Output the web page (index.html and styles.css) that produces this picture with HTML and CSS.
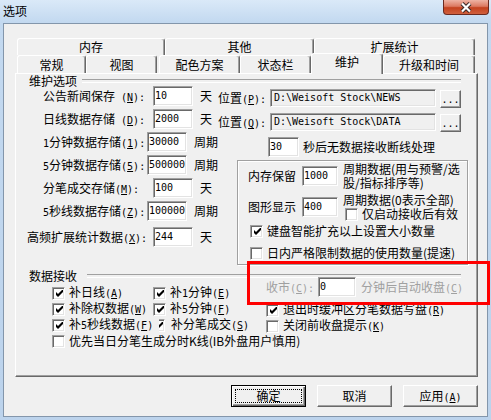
FILE: index.html
```html
<!DOCTYPE html>
<html lang="zh-CN">
<head>
    <meta charset="UTF-8">
    <title>选项</title>
    <link rel="stylesheet" href="styles.css">
</head>
<body>
<div class="window">
    <div class="titlebar">
        <span class="title">选项</span>
        <div class="close">
            <svg width="14" height="11" viewBox="0 0 14 11">
                <path d="M3 1.5 L11 9.5 M11 1.5 L3 9.5" stroke="#3a2a28" stroke-width="4.2"/>
                <path d="M3 1.5 L11 9.5 M11 1.5 L3 9.5" stroke="#fff" stroke-width="2.2"/>
            </svg>
        </div>
    </div>

    <div class="client">
        <div class="tabs">
            <div class="tabrow back">
                <div class="tab tab-memory">内存</div>
                <div class="tab tab-other">其他</div>
                <div class="tab tab-stats">扩展统计</div>
            </div>
            <div class="tabrow front">
                <div class="tab tab-general">常规</div>
                <div class="tab tab-view">视图</div>
                <div class="tab tab-colors">配色方案</div>
                <div class="tab tab-status">状态栏</div>
                <div class="tab tab-maint active">维护</div>
                <div class="tab tab-upgrade">升级和时间</div>
            </div>
        </div>

        <div class="panel">
            <div class="group-title">维护选项</div>
            <div class="maint">
                <div class="maint-left">
                    <div class="field">
                        <span class="lbl">公告新闻保存<span class="en"> (<u>N</u>):</span></span>
                        <div class="edit num">10</div>
                        <span class="unit">天</span>
                    </div>
                    <div class="field">
                        <span class="lbl">日线数据存储<span class="en"> (<u>D</u>):</span></span>
                        <div class="edit num">2000</div>
                        <span class="unit">天</span>
                    </div>
                    <div class="field">
                        <span class="lbl"><span class="en">1</span>分钟数据存储<span class="en">(<u>1</u>):</span></span>
                        <div class="edit num">30000</div>
                        <span class="unit">周期</span>
                    </div>
                    <div class="field">
                        <span class="lbl"><span class="en">5</span>分钟数据存储<span class="en">(<u>5</u>):</span></span>
                        <div class="edit num">500000</div>
                        <span class="unit">周期</span>
                    </div>
                    <div class="field">
                        <span class="lbl">分笔成交存储<span class="en">(<u>M</u>):</span></span>
                        <div class="edit num">100</div>
                        <span class="unit">天</span>
                    </div>
                    <div class="field">
                        <span class="lbl"><span class="en">5</span>秒线数据存储<span class="en">(<u>Z</u>):</span></span>
                        <div class="edit num">100000</div>
                        <span class="unit">周期</span>
                    </div>
                    <div class="field gap">
                        <span class="lbl wide">高频扩展统计数据<span class="en">(<u>X</u>):</span></span>
                        <div class="edit num">244</div>
                        <span class="unit">天</span>
                    </div>
                </div>

                <div class="maint-right">
                    <div class="path-row">
                        <span class="lbl">位置<span class="en">(<u>P</u>):</span></span>
                        <div class="edit path">D:\Weisoft Stock\NEWS</div>
                        <div class="dots">...</div>
                    </div>
                    <div class="path-row">
                        <span class="lbl">位置<span class="en">(<u>Q</u>):</span></span>
                        <div class="edit path">D:\Weisoft Stock\DATA</div>
                        <div class="dots">...</div>
                    </div>
                    <div class="timeout">
                        <div class="edit short">30</div>
                        <span>秒后无数据接收断线处理</span>
                    </div>

                    <div class="mem-box">
                        <div class="mem-row">
                            <span class="lbl">内存保留</span>
                            <div class="edit mid">1000</div>
                            <div class="mem-note">周期数据(用与预警/选<br>股/指标排序等)</div>
                        </div>
                        <div class="mem-row">
                            <span class="lbl">图形显示</span>
                            <div class="edit mid">400</div>
                            <div class="mem-note">
                                <div>周期数据(0表示全部)</div>
                                <label class="check sub"><span class="box"></span><span>仅启动接收后有效</span></label>
                            </div>
                        </div>
                        <label class="check first">
                            <span class="box"><svg width="7" height="7" viewBox="0 0 7 7"><path d="M0 2 L2 4 L7 -1 L7 2 L2 7 L0 5 Z"/></svg></span><span>键盘智能扩充以上设置大小数量</span>
                        </label>
                        <label class="check second"><span class="box"></span><span>日内严格限制数据的使用数量(提速)</span></label>
                    </div>
                </div>
            </div>

            <div class="group-title receive-title">数据接收</div>
            <div class="receive">
                <div class="receive-left">
                    <label class="check"><span class="box"><svg width="7" height="7" viewBox="0 0 7 7"><path d="M0 2 L2 4 L7 -1 L7 2 L2 7 L0 5 Z"/></svg></span><span>补日线<span class="en">(<u>A</u>)</span></span></label>
                    <label class="check"><span class="box"><svg width="7" height="7" viewBox="0 0 7 7"><path d="M0 2 L2 4 L7 -1 L7 2 L2 7 L0 5 Z"/></svg></span><span>补<span class="en">1</span>分钟<span class="en">(<u>E</u>)</span></span></label>
                    <label class="check"><span class="box"><svg width="7" height="7" viewBox="0 0 7 7"><path d="M0 2 L2 4 L7 -1 L7 2 L2 7 L0 5 Z"/></svg></span><span>补除权数据<span class="en">(<u>W</u>)</span></span></label>
                    <label class="check"><span class="box"><svg width="7" height="7" viewBox="0 0 7 7"><path d="M0 2 L2 4 L7 -1 L7 2 L2 7 L0 5 Z"/></svg></span><span>补<span class="en">5</span>分钟<span class="en">(<u>F</u>)</span></span></label>
                    <label class="check"><span class="box"><svg width="7" height="7" viewBox="0 0 7 7"><path d="M0 2 L2 4 L7 -1 L7 2 L2 7 L0 5 Z"/></svg></span><span>补<span class="en">5</span>秒线数据<span class="en">(<u>F</u>)</span></span></label>
                    <label class="check"><span class="box-clip"><span class="box"><svg width="7" height="7" viewBox="0 0 7 7"><path d="M0 2 L2 4 L7 -1 L7 2 L2 7 L0 5 Z"/></svg></span></span><span>补分笔成交<span class="en">(<u>S</u>)</span></span></label>
                    <label class="check span"><span class="box"></span><span>优先当日分笔生成分时K线(IB外盘用户慎用)</span></label>
                </div>

                <div class="receive-right">
                    <div class="close-row">
                        <span class="lbl">收市<span class="en">(<u>C</u>):</span></span>
                        <div class="edit cnum">0</div>
                        <span class="after">分钟后自动收盘<span class="en">(<u>C</u>)</span></span>
                    </div>
                    <label class="check first"><span class="box"><svg width="7" height="7" viewBox="0 0 7 7"><path d="M0 2 L2 4 L7 -1 L7 2 L2 7 L0 5 Z"/></svg></span><span>退出时缓冲区分笔数据写盘<span class="en">(<u>R</u>)</span></span></label>
                    <label class="check"><span class="box"></span><span>关闭前收盘提示<span class="en">(<u>K</u>)</span></span></label>
                </div>
            </div>
        </div>

        <div class="buttons">
            <div class="btn default"><span class="focus">确定</span></div>
            <div class="btn">取消</div>
            <div class="btn">应用<span class="en">(<u>A</u>)</span></div>
        </div>
    </div>

    <div class="mark"></div>
</div>
</body>
</html>
```

FILE: styles.css
```css
* {
    box-sizing: border-box;
}

body {
    margin: 0;
    font-family: "Noto Sans CJK SC", sans-serif;
    font-size: 12px;
    line-height: 14px;
    color: #000;
    background-color: #bcd3ec;
}

.en {
    font-family: "DejaVu Sans Mono", monospace;
    font-size: 10px;
}

u {
    text-underline-offset: 1px;
}

/* window frame */
.window {
    position: relative;
    width: 491px;
    height: 420px;
    display: flex;
    flex-direction: column;
    overflow: hidden;
    background: linear-gradient(to bottom, #dae9f8 0, #c3d9f0 22px, #bcd3ec 100%);
}

.titlebar {
    height: 23px;
    display: flex;
    justify-content: space-between;
    align-items: flex-start;
}

.title {
    padding: 4px 0 0 3px;
}

.close {
    width: 46px;
    height: 15px;
    margin-right: 2px;
    border: 1px solid #6b2a20;
    border-top: none;
    border-radius: 0 0 4px 4px;
    background: linear-gradient(to bottom, #eeb3a4 0, #dc7a62 45%, #c4421f 55%, #d0603e 100%);
    display: flex;
    align-items: center;
    justify-content: center;
}

.client {
    flex: 1;
    margin: 0 3px 3px;
    border: 1px solid #8396ab;
    background-color: #f0f0f0;
    padding: 14px 9px 0 11px;
}

/* tabs */
.tabs {
    width: 463px;
    height: 35px;
}

.tabrow {
    display: flex;
    padding: 0 2px;
}

.back {
    height: 17px;
}

.front {
    height: 18px;
    align-items: flex-end;
}

.tab {
    flex: none;
    border: 1px solid;
    border-color: #fff #696969 transparent #fff;
    border-bottom: none;
    border-radius: 3px 3px 0 0;
    box-shadow: inset -1px 0 #a0a0a0;
    background-color: #f0f0f0;
    text-align: center;
}

.back .tab {
    height: 17px;
    line-height: 16px;
}

.front .tab {
    height: 18px;
    line-height: 17px;
}

.front .tab.active {
    height: 21px;
    margin-bottom: -1px;
    line-height: 16px;
    position: relative;
    z-index: 1;
}

.tab-memory { width: 148px; }
.tab-other { width: 149px; }
.tab-stats { width: 161px; }
.tab-general { width: 69px; }
.tab-view { width: 71px; }
.tab-colors { width: 81px; margin-left: 2px; }
.tab-status { width: 71px; }
.tab-maint { width: 72px; }
.tab-upgrade { width: 92px; }

/* tab page */
.panel {
    width: 463px;
    height: 304px;
    border: 1px solid;
    border-color: #fff #696969 #696969 #fff;
    box-shadow: inset -1px -1px #a0a0a0;
}

.group-title {
    display: flex;
    align-items: center;
    height: 14px;
    line-height: 14px;
    margin: 0 16px 0 13px;
}

.group-title::after {
    content: "";
    flex: 1;
    height: 2px;
    margin-left: 5px;
    border-top: 1px solid #a0a0a0;
    border-bottom: 1px solid #fff;
}

.receive-title {
    margin-top: 4px;
}

.receive-title::after {
    margin-left: 10px;
}

.edit {
    flex: none;
    height: 20px;
    background-color: #fff;
    border: 1px solid;
    border-color: #a0a0a0 #fff #fff #a0a0a0;
    box-shadow: inset 1px 1px #696969, inset -1px -1px #e3e3e3;
    padding-left: 1px;
    font-family: "DejaVu Sans Mono", monospace;
    font-size: 10px;
    line-height: 17px;
    white-space: nowrap;
    overflow: hidden;
}

.maint {
    display: flex;
    margin-top: -2px;
}

.maint-left {
    width: 202px;
}

.field {
    display: flex;
    height: 23px;
}

.field.gap {
    margin-top: 3px;
}

.field .lbl {
    width: 137px;
    padding-left: 27px;
    line-height: 20px;
    white-space: nowrap;
}

.field .lbl.wide {
    padding-left: 11px;
}

.edit.num {
    width: 40px;
}

.unit {
    margin-left: 7px;
    line-height: 20px;
    white-space: nowrap;
}

.maint-right {
    flex: 1;
    display: flex;
    flex-direction: column;
    align-items: flex-start;
}

.path-row {
    display: flex;
    align-items: flex-start;
    height: 18px;
    margin-top: 3px;
}

.path-row + .path-row {
    margin-top: 6px;
}

.path-row .lbl {
    width: 52px;
    line-height: 18px;
    white-space: nowrap;
}

.edit.path {
    width: 166px;
    height: 18px;
    line-height: 15px;
    padding-left: 3px;
    background-color: #f0f0f0;
}

.dots {
    width: 21px;
    height: 18px;
    margin: 1px 0 0 4px;
    border: 1px solid;
    border-color: #fff #696969 #696969 #fff;
    box-shadow: inset -1px -1px #a0a0a0;
    text-align: center;
    font-family: "DejaVu Sans Mono", monospace;
    font-size: 10px;
    line-height: 18px;
}

.timeout {
    display: flex;
    margin: 6px 0 0 50px;
}

.edit.short {
    width: 31px;
}

.timeout span {
    margin-left: 4px;
    line-height: 20px;
    white-space: nowrap;
}

.mem-box {
    width: 231px;
    height: 105px;
    margin: 3px 0 0 19px;
    padding: 1px 0 0 10px;
    border: 1px solid #a0a0a0;
    box-shadow: inset 1px 1px #fff, 1px 1px #fff;
}

.mem-row {
    display: flex;
    align-items: center;
    height: 28px;
}

.mem-row + .mem-row {
    margin-top: 3px;
}

.mem-row .lbl {
    width: 54px;
}

.edit.mid {
    width: 36px;
}

.mem-note {
    margin-left: 5px;
    line-height: 14px;
    white-space: nowrap;
}

/* check boxes */
.check {
    display: flex;
    align-items: center;
    height: 16px;
    white-space: nowrap;
}

.box {
    flex: none;
    width: 13px;
    height: 13px;
    margin-right: 4px;
    background-color: #fff;
    border: 1px solid;
    border-color: #a0a0a0 #fff #fff #a0a0a0;
    box-shadow: inset 1px 1px #696969, inset -1px -1px #e3e3e3;
    display: flex;
    align-items: center;
    justify-content: center;
}

.box svg {
    margin: 1px 0 0 1px;
}

.box-clip {
    flex: none;
    width: 6px;
    height: 13px;
    margin-left: 6px;
    margin-right: 6px;
    display: flex;
    justify-content: flex-end;
    overflow: hidden;
}

.box-clip .box {
    margin-right: 0;
}

.check.sub {
    height: 14px;
    margin-left: 2px;
}

.mem-box .check.first {
    height: 14px;
    margin: 3px 0 0 2px;
}

.mem-box .check.second {
    height: 14px;
    margin: 8px 0 0 2px;
}

/* data receive */
.receive {
    display: flex;
    margin-top: -6px;
}

.receive-left {
    width: 214px;
    margin-left: 36px;
    padding-top: 8px;
    display: grid;
    grid-template-columns: 101px minmax(0, 1fr);
    grid-auto-rows: 16px;
    align-content: start;
}

.receive-left .span {
    grid-column: span 2;
}

.receive-right {
    display: flex;
    flex-direction: column;
}

.close-row {
    display: flex;
    height: 20px;
    color: #a0a0a0;
}

.close-row .lbl {
    width: 52px;
    line-height: 20px;
    white-space: nowrap;
}

.edit.cnum {
    width: 38px;
    color: #000;
}

.close-row .after {
    margin-left: 5px;
    line-height: 20px;
    white-space: nowrap;
}

.receive-right .check.first {
    margin-top: 5px;
}

/* dialog buttons */
.buttons {
    width: 463px;
    display: flex;
    justify-content: flex-end;
    gap: 11px;
    margin-top: 8px;
}

.btn {
    width: 75px;
    height: 22px;
    border: 1px solid;
    border-color: #fff #696969 #696969 #fff;
    box-shadow: inset -1px -1px #a0a0a0;
    background-color: #f0f0f0;
    text-align: center;
    line-height: 20px;
}

.btn.default {
    border-color: #000;
    box-shadow: inset 1px 1px #fff, inset -1px -1px #696969, inset -2px -2px #a0a0a0;
}

.focus {
    display: block;
    margin: 3px;
    border: 1px dotted #000;
    line-height: 12px;
}

/* annotation drawn over the screenshot */
.mark {
    position: absolute;
    left: 247px;
    top: 261px;
    width: 243px;
    height: 44px;
    border: 3px solid #f00;
}
```
